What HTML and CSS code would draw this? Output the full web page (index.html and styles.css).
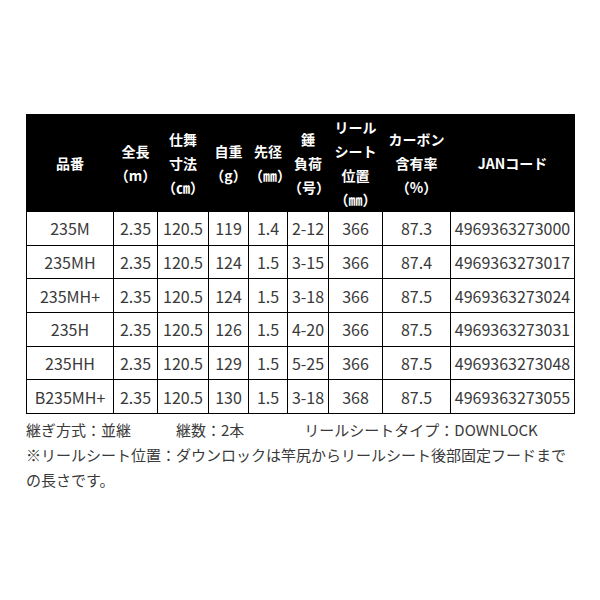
FILE: index.html
```html
<!DOCTYPE html>
<html lang="ja">
<head>
<meta charset="utf-8">
<link rel="stylesheet" href="styles.css">
</head>
<body>
<div class="page">
  <table class="spec">
    <colgroup>
      <col class="c1"><col class="c2"><col class="c3"><col class="c4"><col class="c5"><col class="c6"><col class="c7"><col class="c8"><col class="c9">
    </colgroup>
    <thead>
      <tr>
        <th>品番</th>
        <th>全長<br>（m）</th>
        <th>仕舞<br>寸法<br>（㎝）</th>
        <th>自重<br>（g）</th>
        <th>先径<br>（㎜）</th>
        <th>錘<br>負荷<br>（号）</th>
        <th>リール<br>シート<br>位置<br>（㎜）</th>
        <th>カーボン<br>含有率<br>（%）</th>
        <th>JANコード</th>
      </tr>
    </thead>
    <tbody>
      <tr><td>235M</td><td>2.35</td><td>120.5</td><td>119</td><td>1.4</td><td>2-12</td><td>366</td><td>87.3</td><td>4969363273000</td></tr>
      <tr><td>235MH</td><td>2.35</td><td>120.5</td><td>124</td><td>1.5</td><td>3-15</td><td>366</td><td>87.4</td><td>4969363273017</td></tr>
      <tr><td>235MH+</td><td>2.35</td><td>120.5</td><td>124</td><td>1.5</td><td>3-18</td><td>366</td><td>87.5</td><td>4969363273024</td></tr>
      <tr><td>235H</td><td>2.35</td><td>120.5</td><td>126</td><td>1.5</td><td>4-20</td><td>366</td><td>87.5</td><td>4969363273031</td></tr>
      <tr><td>235HH</td><td>2.35</td><td>120.5</td><td>129</td><td>1.5</td><td>5-25</td><td>366</td><td>87.5</td><td>4969363273048</td></tr>
      <tr><td>B235MH+</td><td>2.35</td><td>120.5</td><td>130</td><td>1.5</td><td>3-18</td><td>368</td><td>87.5</td><td>4969363273055</td></tr>
    </tbody>
  </table>
  <p class="note">継ぎ方式：並継　　　継数：2本　　　　リールシートタイプ：DOWNLOCK</p>
  <p class="note">※リールシート位置：ダウンロックは竿尻からリールシート後部固定フードまでの長さです。</p>
</div>
</body>
</html>
```

FILE: styles.css
```css
html, body {
  margin: 0;
  padding: 0;
  background: #fff;
}

.page {
  padding: 114px 26px 0 26px;
  font-family: "Noto Sans CJK JP", "Noto Sans", sans-serif;
  color: #3a3a3a;
}

.spec {
  border-collapse: collapse;
  table-layout: fixed;
  width: 548px;
}

.c1 { width: 87px; }
.c2 { width: 44px; }
.c3 { width: 51px; }
.c4 { width: 40px; }
.c5 { width: 39px; }
.c6 { width: 41px; }
.c7 { width: 54px; }
.c8 { width: 68px; }
.c9 { width: 124px; }

.spec th {
  background: #000;
  color: #fff;
  font-weight: bold;
  font-size: 14px;
  line-height: 24px;
  height: 95px;
  padding: 0;
  border: 1px solid #000;
  text-align: center;
  vertical-align: middle;
  white-space: nowrap;
}

.spec td {
  font-size: 16px;
  height: 32.7px;
  padding: 0;
  line-height: 20px;
  border: 1px solid #000;
  text-align: center;
  vertical-align: middle;
  white-space: nowrap;
  color: #3a3a3a;
}

.note {
  margin: 0;
  width: 548px;
  font-size: 15px;
  line-height: 25px;
  color: #3a3a3a;
}

.note:first-of-type {
  margin-top: 3px;
}
```
